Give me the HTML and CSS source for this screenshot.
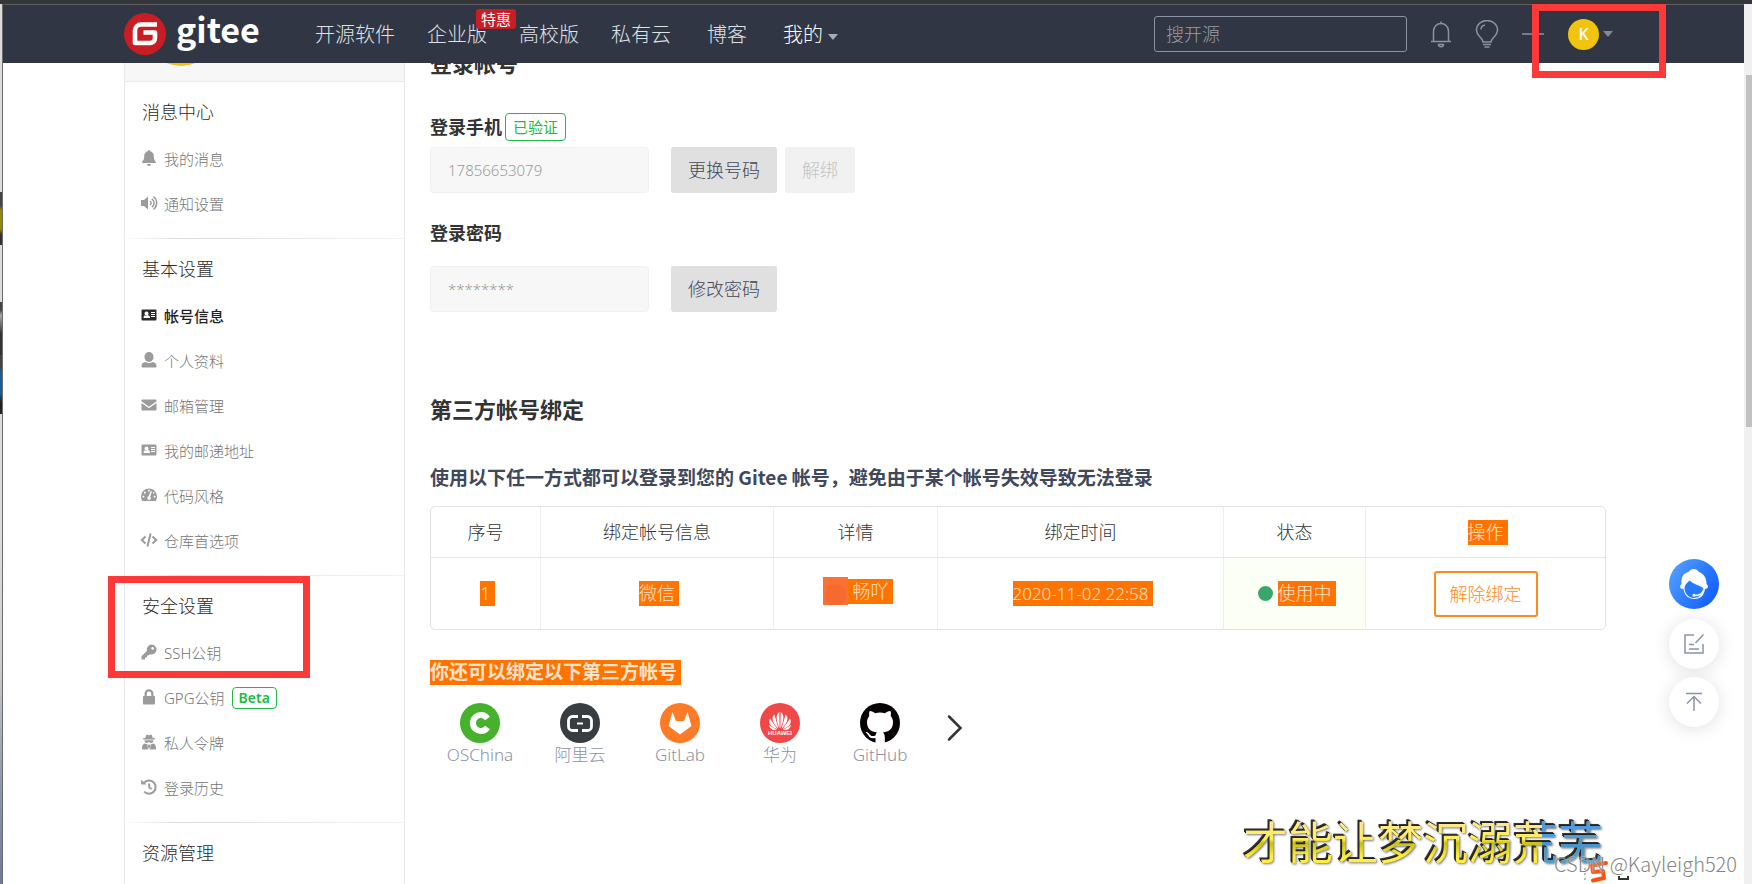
FILE: index.html
```html
<!DOCTYPE html>
<html lang="zh-CN">
<head>
<meta charset="utf-8">
<title>帐号信息 - Gitee</title>
<link rel="stylesheet" href="styles.css">
</head>
<body>
<svg class="defs" aria-hidden="true">
  <symbol id="i-card" viewBox="0 0 16 16"><path fill-rule="evenodd" d="M1.500 2.500h13a1 1 0 0 1 1 1v9a1 1 0 0 1-1 1h-13a1 1 0 0 1-1-1v-9a1 1 0 0 1 1-1zM5.500 4.500a2 2 0 1 0 .01 0zM2.500 11h6.500c0-2-1-2.700-2-2.700h-2.500c-1 0-2 .7-2 2.700zM10 5v1h4V5zM10 7v1h4V7zM10 9v1h4V9z"/></symbol>
</svg>
<div class="window">
  <div class="desktop" aria-hidden="true"><i class="tile gold"></i><i class="tile grey"></i><i class="tile blue"></i></div>
  <div class="page">
    <header class="topbar">
      <a class="logo" href="#">
        <svg viewBox="0 0 42 42" width="42" height="42"><circle cx="21" cy="21" r="21" fill="#c71d23"/><path d="M33 11.500H17a6 6 0 0 0-6 6V30h15a5 5 0 0 0 5-5v-5.500H19.500" fill="none" stroke="#fff" stroke-width="4.600" stroke-linejoin="round"/></svg>
        <span>gitee</span>
      </a>
      <nav class="nav">
        <a href="#">开源软件</a>
        <a href="#" class="promo">企业版<em>特惠</em></a>
        <a href="#">高校版</a>
        <a href="#">私有云</a>
        <a href="#">博客</a>
        <a href="#" class="mine">我的<i class="caret"></i></a>
      </nav>
      <input class="search" type="search" placeholder="搜开源" aria-label="搜开源">
      <div class="tools">
        <button aria-label="通知"><svg viewBox="0 0 24 28" width="24" height="28"><path d="M2 21.500h20M4.500 21.500V11a7.500 7.500 0 0 1 15 0v10.500M12 1.500v2M9.500 24.500h5c0 3-5 3-5 0z"/></svg></button>
        <button aria-label="提示"><svg viewBox="0 0 24 28" width="24" height="28"><path d="M8 22c0-4-6.500-6-6.500-12a10.500 9.500 0 0 1 21 0c0 6-6.500 8-6.500 12zM8 24.500h8M9.500 27h5M6 9.500c0-2.500 1.500-4 4-4.500"/></svg></button>
        <button aria-label="新建"><svg viewBox="0 0 24 28" width="24" height="28"><path d="M1 14h22"/></svg></button>
      </div>
      <button class="user" aria-label="用户菜单"><span class="avatar">K</span><i class="caret dim"></i><i class="mark mark-user"></i></button>
    </header>

    <div class="content">
      <aside class="sidebar">
        <div class="profile"><i class="portrait"></i></div>
        <section class="group">
          <h2>消息中心</h2>
          <a href="#"><svg viewBox="0 0 16 16"><path d="M8 0c.7 0 1 .5 1 1.200 2.500.5 3.800 2.300 3.800 4.800 0 3.500.8 4.500 2 5.700.4.500.1 1.300-.6 1.300H1.800c-.7 0-1-.8-.6-1.300C2.400 10.500 3.200 9.500 3.200 6c0-2.500 1.300-4.300 3.800-4.800C7 .5 7.300 0 8 0zM6 14h4c0 2.600-4 2.600-4 0z"/></svg>我的消息</a>
          <a href="#"><svg viewBox="0 0 16 16"><path d="M0 5h3l4-3.500v13L3 11H0z"/><path class="line" d="M9 6c1.500 1 1.500 3 0 4M10.800 3.800c3 2 3 6.400 0 8.400M12.500 1.500c4.200 3.500 4.200 9.500 0 13"/></svg>通知设置</a>
        </section>
        <section class="group">
          <h2>基本设置</h2>
          <a href="#" class="active"><svg viewBox="0 0 16 16"><use href="#i-card"/></svg>帐号信息</a>
          <a href="#"><svg viewBox="0 0 16 16"><path d="M8 0a4.500 4.500 0 0 1 4.500 4.800C12.500 8 10.500 10 8 10S3.500 8 3.500 4.800A4.500 4.500 0 0 1 8 0zM4.500 10c2 1.500 5 1.500 7 0 2.500.3 4 1.700 4 4 0 1-.5 1.500-1.500 1.500H2C1 15.500.5 15 .5 14c0-2.300 1.500-3.700 4-4z"/></svg>个人资料</a>
          <a href="#"><svg viewBox="0 0 16 16"><path d="M1.500 2.500h13c.6 0 1 .4 1 1v.8L8 9.800.5 4.300v-.8c0-.6.4-1 1-1zM.5 6 8 11.300 15.500 6v6.500c0 .6-.4 1-1 1h-13c-.6 0-1-.4-1-1z"/></svg>邮箱管理</a>
          <a href="#"><svg viewBox="0 0 16 16"><use href="#i-card"/></svg>我的邮递地址</a>
          <a href="#"><svg viewBox="0 0 16 16"><path fill-rule="evenodd" d="M8 1.500a8 8 0 0 1 8 8c0 1.800-.5 3.300-1.300 4.500H1.300C.5 12.800 0 11.300 0 9.500a8 8 0 0 1 8-8zM7.200 2.800v1.800h1.600V2.800zM3 4.800v1.700h1.700V4.800zM1.500 8.800v1.700h1.800V8.800zM12.700 8.800v1.700h1.800V8.800zM9.800 4 7.600 9.300c-2.200.8-1.400 3.900.7 3.700 1.700-.1 2-2.300.8-3.200L11 4.500zM12 5v1.500h1.300V5z"/></svg>代码风格</a>
          <a href="#"><svg viewBox="0 0 16 16"><path class="line bold" d="M4.500 4.500.8 8l3.700 3.500M11.500 4.500 15.200 8l-3.700 3.500M9.600 1.500l-3.200 13"/></svg>仓库首选项</a>
        </section>
        <section class="group">
          <i class="mark mark-keys"></i>
          <h2>安全设置</h2>
          <a href="#"><svg viewBox="0 0 16 16"><path fill-rule="evenodd" d="M10.500.5a5 5 0 1 1-1.600 9.700L7.500 11.500H6v2H4v2H.5v-3.200L6 6.800A5 5 0 0 1 10.500.5zM11.600 3a1.400 1.400 0 1 0 .01 0z"/></svg>SSH公钥</a>
          <a href="#"><svg viewBox="0 0 16 16"><path fill-rule="evenodd" d="M3.500 7V4.800a4.500 4.500 0 0 1 9 0V7h.5c.6 0 1 .4 1 1v6.500c0 .6-.4 1-1 1H3c-.6 0-1-.4-1-1V8c0-.6.4-1 1-1zM5.700 7h4.600V4.800a2.300 2.300 0 0 0-4.600 0z"/></svg>GPG公钥<span class="tag beta">Beta</span></a>
          <a href="#"><svg viewBox="0 0 16 16"><path fill-rule="evenodd" d="M5.500.5 8 1.200l2.500-.7L11.800 4h2v1.500H2.200V4h2zM3.500 6.300h9C12.500 8.500 11.500 9 10 9L8 8 6 9C4.500 9 3.500 8.500 3.500 6.300zM3.500 9.500l3 1L7 15.500H2c-.7 0-1-.4-1-1.200 0-2.600.8-4 2.500-4.800zM12.500 9.500l-3 1-.5 5h5c.7 0 1-.4 1-1.200 0-2.600-.8-4-2.500-4.800zM7.300 10.500h1.400l.4 2-1.100 3-1.100-3z"/></svg>私人令牌</a>
          <a href="#"><svg viewBox="0 0 16 16"><path class="line bold" d="M3 3.800a6.600 6.600 0 1 1 .2 8.800M8.200 4.500V8.500l2.500 1.500"/><path d="M0 .8 5.800 5.500H.3z"/></svg>登录历史</a>
        </section>
        <section class="group">
          <h2>资源管理</h2>
        </section>
      </aside>

      <main class="main">
        <h1>登录帐号</h1>
        <div class="field-head"><label for="phone">登录手机</label><span class="tag">已验证</span></div>
        <div class="row">
          <input id="phone" type="text" value="17856653079" disabled>
          <button class="btn">更换号码</button>
          <button class="btn" disabled>解绑</button>
        </div>
        <div class="field-head second"><label for="pwd">登录密码</label></div>
        <div class="row second">
          <input id="pwd" type="text" value="********" disabled>
          <button class="btn">修改密码</button>
        </div>

        <h1 class="bind">第三方帐号绑定</h1>
        <p class="hint">使用以下任一方式都可以登录到您的 Gitee 帐号，避免由于某个帐号失效导致无法登录</p>
        <table>
          <colgroup><col class="c1"><col class="c2"><col class="c3"><col class="c4"><col class="c5"><col class="c6"></colgroup>
          <thead><tr><th>序号</th><th>绑定帐号信息</th><th>详情</th><th>绑定时间</th><th>状态</th><th><span class="sel">操作</span></th></tr></thead>
          <tbody><tr>
            <td><span class="sel">1</span></td>
            <td><span class="sel">微信</span></td>
            <td><span class="who"><i class="pic"></i><span class="sel">畅吖</span></span></td>
            <td><span class="sel date">2020-11-02 22:58</span></td>
            <td class="ok"><span class="who"><i class="dot"></i><span class="sel">使用中</span></span></td>
            <td><button class="unbind">解除绑定</button></td>
          </tr></tbody>
        </table>

        <p class="more"><span class="sel">你还可以绑定以下第三方帐号</span></p>
        <div class="providers">
          <a href="#"><svg viewBox="0 0 40 40"><circle cx="20" cy="20" r="20" fill="#46b12a"/><path d="M27.500 15.500a8 8 0 1 0 0 9" fill="none" stroke="#fff" stroke-width="6"/><circle cx="27.500" cy="20" r="2.300" fill="#46b12a"/></svg>OSChina</a>
          <a href="#"><svg viewBox="0 0 40 40"><circle cx="20" cy="20" r="20" fill="#373d41"/><path d="M18 13.500h-5.500a4 4 0 0 0-4 4v6a4 4 0 0 0 4 4H18M22 13.500h5.500a4 4 0 0 1 4 4v6a4 4 0 0 1-4 4H22" fill="none" stroke="#fff" stroke-width="2.800"/><path d="M17 20.500h6" stroke="#fff" stroke-width="2"/></svg>阿里云</a>
          <a href="#"><svg viewBox="0 0 40 40"><circle cx="20" cy="20" r="20" fill="#fd7b26"/><path d="M12.500 9 16 18h8l3.500-9L31.500 23 20 31.500 8.500 23z" fill="#fff"/></svg>GitLab</a>
          <a href="#"><svg viewBox="0 0 40 40"><circle cx="20" cy="20" r="20" fill="#f04848"/><g fill="#fff"><path d="M19.600 25.500C16.500 19 15 11.500 19.300 9z"/><path d="M20.400 25.500C23.500 19 25 11.500 20.700 9zM18.300 25.500C13 21 10.500 14.500 14.500 11.500c1 4 2.500 9 3.800 14zM21.700 25.500C27 21 29.500 14.500 25.500 11.500c-1 4-2.500 9-3.800 14zM17.300 26C11 24.500 7.500 19.500 10 15.500c2 3.500 4.500 7 7.300 10.500zM22.700 26C29 24.500 32.500 19.500 30 15.500c-2 3.500-4.500 7-7.300 10.500zM16.800 26.800c-4.500 1-7.300-1.500-7.800-4.800 2.500 1.800 5 3.300 7.800 4.800zM23.200 26.800c4.500 1 7.300-1.500 7.800-4.800-2.500 1.800-5 3.300-7.800 4.800z"/><text x="20" y="32" text-anchor="middle" class="hw">HUAWEI</text></g></svg>华为</a>
          <a href="#"><svg viewBox="0 0 40 40"><circle cx="20" cy="20" r="20" fill="#050103"/><path d="M15.500 40v-5c-5 1-6.500-1-7.500-3.200-.7-1.300-1.500-1.700-2.500-2.600 2.500-.7 3.700 1.800 5 3 1.500 1.300 3.300 1 5 .3.200-1.500.8-2.500 1.500-3-6-.8-10-3.500-10-10.500 0-2.300 1-4.500 2.300-6-.3-1.500-.3-3.500.3-5 2.400 0 4.200 1.200 5.600 2.200 3.200-.8 6.600-.8 9.700 0 1.500-1 3.200-2.200 5.600-2.200.6 1.500.6 3.500.2 5 1.400 1.500 2.300 3.700 2.300 6 0 7-4 9.700-10 10.500 1 .9 1.800 2.500 1.800 4.500v6z" fill="#fff"/></svg>GitHub</a>
          <button class="next" aria-label="更多"><svg viewBox="0 0 16 28" width="16" height="28"><path d="M2 2.500 13.500 14 2 25.500" fill="none" stroke="#333" stroke-width="2.500" stroke-linecap="round"/></svg></button>
        </div>
      </main>
    </div>
  </div>
  <div class="scrollbar" aria-hidden="true"><i></i></div>

  <div class="floaters">
    <button class="chat" aria-label="客服"><svg viewBox="0 0 50 50"><path d="M12 29.500c-1.500-1-1-3.500.5-4.500C12 17 15 14 19.500 13c2.500-4 8-4 10.500 0 5 2 7.500 6 7.500 12 1.500 1 2 3.500.5 4.500l-2 .5c-1 6.500-4.500 10-10.500 10s-10-3.500-11-10z" fill="#fff"/><path d="M15.500 29c0-2.500 2-5 5-7.500 4 4 10 4.500 14 8-.5 6-4.500 9.500-9.500 9.500s-9.500-4-9.500-10z" fill="#247bff"/><path d="M34.500 31c-1 4-4.500 5.500-9 5.500" fill="none" stroke="#fff"/><circle cx="25" cy="36.300" r="1.500" fill="#fff"/></svg></button>
    <button aria-label="反馈"><svg viewBox="0 0 50 50"><path d="M25 16h-9v18h18v-9M20 25.500h5M20 30h10M34.500 15.500 26.500 24"/></svg></button>
    <button aria-label="回到顶部"><svg viewBox="0 0 50 50"><path d="M17 16.500h16M25 34V19.500M18 26.500l7-7 7 7"/></svg></button>
  </div>

  <div class="lyrics"><span class="fill">才能让梦沉溺荒芜</span></div>
  <div class="ime" aria-hidden="true"><i class="grip"></i><svg viewBox="0 0 48 24" width="48" height="24"><path d="M20 3 6 5.500 7 12l10-1 1 7-11 2.500" fill="none" stroke="#ff5014" stroke-width="4" stroke-linejoin="round" stroke-linecap="round"/><path d="M33 16v3h9v-3" fill="none" stroke="#333" stroke-width="2"/></svg></div>
  <div class="watermark">CSDN @Kayleigh520</div>
</div>
</body>
</html>
```
FILE: styles.css
```css
* { box-sizing: border-box; }
body { margin: 0; background: #fff; color: #333; font: 300 18px/24px "Noto Sans", "Noto Sans CJK SC", sans-serif; }
h1, h2, p { margin: 0; }
a { color: inherit; text-decoration: none; }
button, input { font: inherit; color: inherit; }
button { padding: 0; border: 0; background: none; }
.defs { position: absolute; width: 0; height: 0; }

.window { position: relative; display: flex; height: 100vh; overflow: hidden; border-top: 4px solid #35363a; }
.desktop { flex: none; width: 3px; border-right: 1px solid #6b6b6b; padding-top: 188px; background: linear-gradient(#dcdcdc 0 60%, #cdcdcd 75%, #8d9cac 88%, #6d7c94); }
.tile { display: block; height: 53px; background: linear-gradient(#444, #333); }
.tile.gold { margin-bottom: 57px; background: linear-gradient(#444 25%, #9c8600 35% 70%, #333 80%); }
.tile.grey { background: linear-gradient(#444 15%, #aaa 25%, #333 60%); }
.tile.blue { height: 59px; background: linear-gradient(#444 20%, #1c5f8f 30% 65%, #222 80%); }
.page { flex: 1; min-width: 0; }

.topbar { position: relative; z-index: 2; display: flex; align-items: center; height: 59px; padding: 0 131px 0 121px; background: #303644; border-top: 1px solid #5e5e5e; color: #dfe1e5; }
.logo { display: flex; align-items: center; gap: 10px; width: 191px; color: #fff; }
.logo span { font: 700 34px/40px "Noto Sans CJK SC", sans-serif; padding-bottom: 10px; }
.nav { display: flex; gap: 32px; padding-top: 2px; font-size: 20px; white-space: nowrap; }
.promo { position: relative; }
.promo em { position: absolute; left: 49px; top: -14px; width: 40px; border-radius: 3px; background: #c71d23; color: #fff; font: 400 15px/20px "Noto Sans CJK SC", sans-serif; text-align: center; }
.nav a:nth-child(n+5) { margin-left: 4px; }
.mine { display: flex; align-items: center; gap: 5px; color: #fff; }
.caret { width: 0; height: 0; border: 5px solid transparent; border-top: 6px solid #a8acb4; border-bottom: 0; margin-top: 4px; }
.caret.dim { border-top-color: #83899b; margin-top: 0; }
.search { width: 253px; height: 36px; margin-left: auto; padding: 0 11px; border: 1px solid #8c92a4; border-radius: 3px; background: transparent; outline: 0; }
.search::placeholder { color: #9a9da3; }
.tools { display: flex; gap: 22px; margin: 0 23px 0 22px; }
.tools button { display: flex; }
.tools svg, .floaters svg { fill: none; stroke: #8c92a4; stroke-width: 1.500; }
.user { position: relative; display: flex; align-items: center; gap: 4px; }
.avatar { width: 31px; height: 31px; border-radius: 50%; background: #f1c40f; color: #fff; font-size: 16px; font-weight: 500; line-height: 31px; }
.mark { position: absolute; border: 7px solid #fd3838; pointer-events: none; }
.mark-user { left: -36px; top: -15px; width: 134px; height: 74px; }
.mark-keys { left: -17px; top: 0; width: 202px; height: 102px; }

.content { display: flex; gap: 25px; padding: 0 138px 0 121px; }
.sidebar { flex: none; width: 281px; border: solid #e3e9ed; border-width: 0 1px; }
.profile { height: 19px; padding-left: 20px; background: #f7f7f7; border-bottom: 1px solid #e3e9ed; }
.portrait { display: block; width: 72px; height: 72px; border-radius: 50%; background: #f1c40f; transform: translateY(-69px); }
.group { position: relative; padding: 12px 0 12px 17px; color: #757575; font-size: 15px; border-bottom: 1px solid; border-image: linear-gradient(90deg, #fff, #ddd 20%, #f4f4f4) 1; }
.group h2 { margin-bottom: 6px; color: #2b2b2b; font-size: 18px; font-weight: 300; line-height: 36px; }
.group a { display: flex; align-items: center; height: 45px; }
.group svg { width: 16px; height: 16px; margin: 0 7px 1px -1px; overflow: visible; fill: #9b9b9b; }
.group a.active { color: #222; font-weight: 500; }
.group a.active svg { fill: #2b2b2b; }
.group .line { fill: none; stroke: #9b9b9b; stroke-width: 1.500; }
.group .bold { stroke-width: 2; }
.tag { border: 1px solid #21ba45; border-radius: 4px; padding: 0 7px; color: #21ba45; font-size: 15px; font-weight: 400; line-height: 26px; }
.tag.beta { margin-left: 7px; padding: 0 6px; font-size: 14px; font-weight: 600; line-height: 20px; }

.main { flex: 1; min-width: 0; }
h1 { margin-top: -15px; font-size: 22px; font-weight: 700; line-height: 30px; }
.field-head { display: flex; align-items: center; gap: 3px; height: 28px; margin-top: 35px; font-weight: 700; }
.field-head.second { margin-top: 26px; }
.row { display: flex; gap: 8px; margin-top: 6px; }
.row.second { margin-top: 19px; }
.row input { width: 219px; height: 46px; margin-right: 14px; padding: 0 17px; border: 1px solid #f1f1f1; border-radius: 4px; background: #f7f7f7; color: #999; font-size: 15px; }
.btn { height: 46px; padding: 0 17px; border-radius: 3px; background: #e0e0e0; color: #40485b; }
.btn:disabled { background: #f1f1f1; color: #c3c3c3; }
h1.bind { margin-top: 82px; }
.hint { margin-top: 41px; color: #40485b; font-family: "Noto Sans CJK SC", sans-serif; font-size: 19px; font-weight: 700; }
table { width: 100%; margin-top: 17px; table-layout: fixed; border: 1px solid #dfe3e6; border-radius: 5px; border-spacing: 0; text-align: center; }
.c1 { width: 110px; } .c2 { width: 233px; } .c3 { width: 164px; } .c4 { width: 286px; } .c5 { width: 142px; }
th, td { padding: 0; border-right: 1px solid #eee; }
th { height: 51px; font-weight: 300; border-bottom: 1px solid #e3e5e6; }
td { height: 71px; }
th:last-child, td:last-child { border-right: 0; }
.sel { display: inline-block; margin-right: -4px; padding-right: 4px; background: #ff7300; color: #ffe3cc; line-height: 25px; }
.date { font-size: 17px; }
.who { display: inline-flex; align-items: center; }
.pic { width: 25px; height: 28px; background: radial-gradient(circle at 50% 65%, #f56a2e 0 10px, #ff7035 12px); }
.pic + .sel { padding-left: 5px; }
.dot { width: 15px; height: 15px; margin-right: 5px; border-radius: 50%; background: #3aa76a; }
.ok { background: #fcfff5; }
.unbind { height: 46px; padding: 0 14px; border: 2px solid #fe8a20; border-radius: 3px; color: #fe8a20; }
.more { margin-top: 30px; font-size: 19px; font-weight: 700; }
.providers { display: flex; align-items: center; margin-top: 18px; color: #8c92a4; font-size: 17px; }
.providers a { display: flex; flex-direction: column; align-items: center; width: 100px; }
.providers svg { display: block; }
.providers a svg { width: 40px; height: 40px; }
.hw { font: 700 6px "Liberation Sans", sans-serif; }
.next { margin: 0 0 14px 17px; }

.scrollbar { flex: none; width: 8px; padding: 71px 0 0 2px; background: #f0f0f0; }
.scrollbar i { display: block; height: 352px; background: #c1c1c1; }
.floaters { position: absolute; right: 33px; top: 555px; display: grid; gap: 8px; z-index: 3; }
.floaters button { width: 50px; height: 50px; border-radius: 50%; background: #fff; box-shadow: 0 2px 18px rgba(0, 0, 0, .12); }
.floaters .chat { margin-bottom: 2px; background: linear-gradient(120deg, #56a5ff, #0a55ff); box-shadow: none; }
.floaters svg { display: block; width: 50px; height: 50px; }
.floaters .chat svg { stroke: none; }

.lyrics { position: absolute; right: 149px; bottom: 16px; font: 400 45px/54px "Noto Sans CJK SC", sans-serif; white-space: nowrap; filter: drop-shadow(-1px -1px 0 #222) drop-shadow(-1px -1px 0 #333) drop-shadow(1px 1px 1px #777); }
.fill { color: transparent; background: linear-gradient(90deg, transparent 83%, rgba(48, 140, 235, .85) 83%), linear-gradient(#ffe98a 25%, #ffee58 48%, #c8c010 54%, #ffee40 75%); background-clip: text; -webkit-background-clip: text; }
.ime { position: absolute; right: 118px; bottom: 0; display: flex; }
.grip { width: 2px; height: 14px; margin-top: 8px; background: repeating-linear-gradient(#bbb 0 2px, transparent 2px 5px); }
.watermark { position: absolute; right: 15px; bottom: 8px; color: #858585; font: 300 20px/24px "Noto Sans CJK SC", sans-serif; text-shadow: 0 0 2px #fff; }
```
